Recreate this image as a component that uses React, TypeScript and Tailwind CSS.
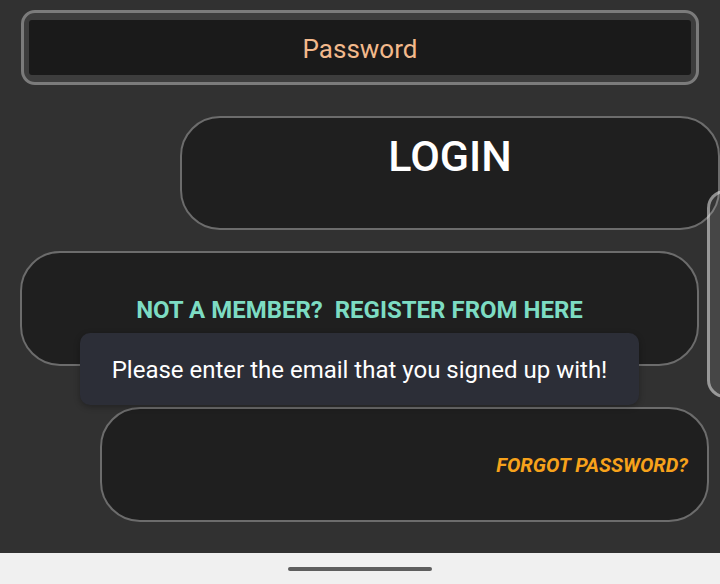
export default function App() {
  return (
    <div
      className="relative w-[720px] h-[584px] overflow-hidden bg-[#313131] flex flex-col"
      style={{ fontFamily: "Roboto, 'Noto Sans', sans-serif" }}
    >
      {/* Form */}
      <div className="flex-1 flex flex-col pt-[10px]">
        {/* Password field */}
        <div className="ml-[21px] w-[678px] h-[75px] rounded-[14px] border-[3px] border-[#7b7b7b] bg-[#3d3d3d] px-[5px] pt-[7px] pb-[7px]">
          <div className="h-full rounded-[3px] bg-[#1a1a1a] flex items-center justify-center pt-[2px]">
            <span className="text-[26px] text-[#f2b98c] leading-none">Password</span>
          </div>
        </div>

        {/* Login */}
        <button className="mt-[31px] ml-[180px] w-[540px] h-[114px] rounded-[40px] border-2 border-[#6c6c6c] bg-[#1f1f1f] flex justify-center items-start pt-[17px]">
          <span className="text-[43px] font-medium text-white leading-none">LOGIN</span>
        </button>

        {/* Register */}
        <div className="mt-[21px] ml-[20px] w-[679px] h-[115px] rounded-[40px] border-2 border-[#6c6c6c] bg-[#1f1f1f] flex items-center justify-center pt-[3px]">
          <span className="text-[24px] font-bold text-[#7ddcc3] leading-none whitespace-pre">
            NOT A MEMBER?  REGISTER FROM HERE
          </span>
        </div>

        {/* Forgot */}
        <div className="mt-[41px] ml-[100px] w-[609px] h-[115px] rounded-[40px] border-2 border-[#6c6c6c] bg-[#1f1f1f] flex items-center justify-end pr-[19px]">
          <span className="text-[20px] font-bold italic text-[#f7a21b] leading-none">FORGOT PASSWORD?</span>
        </div>
      </div>

      {/* Navigation bar */}
      <div className="h-[31px] bg-[#f0f0f0] flex items-center justify-center">
        <div className="w-[144px] h-[4px] rounded-full bg-[#5e5e5e]" />
      </div>

      {/* Partial card at right edge */}
      <div className="absolute left-[707px] top-[190px] w-[40px] h-[208px] rounded-l-[18px] border-[3px] border-white/45 bg-white/10" />

      {/* Toast */}
      <div className="absolute left-[80px] top-[333px] w-[559px] h-[72px] rounded-[10px] bg-[#2c2e37] shadow-[0_2px_6px_rgba(0,0,0,0.3)] flex items-center justify-center pt-[2px]">
        <span className="text-[24px] text-white leading-none">Please enter the email that you signed up with!</span>
      </div>
    </div>
  );
}
